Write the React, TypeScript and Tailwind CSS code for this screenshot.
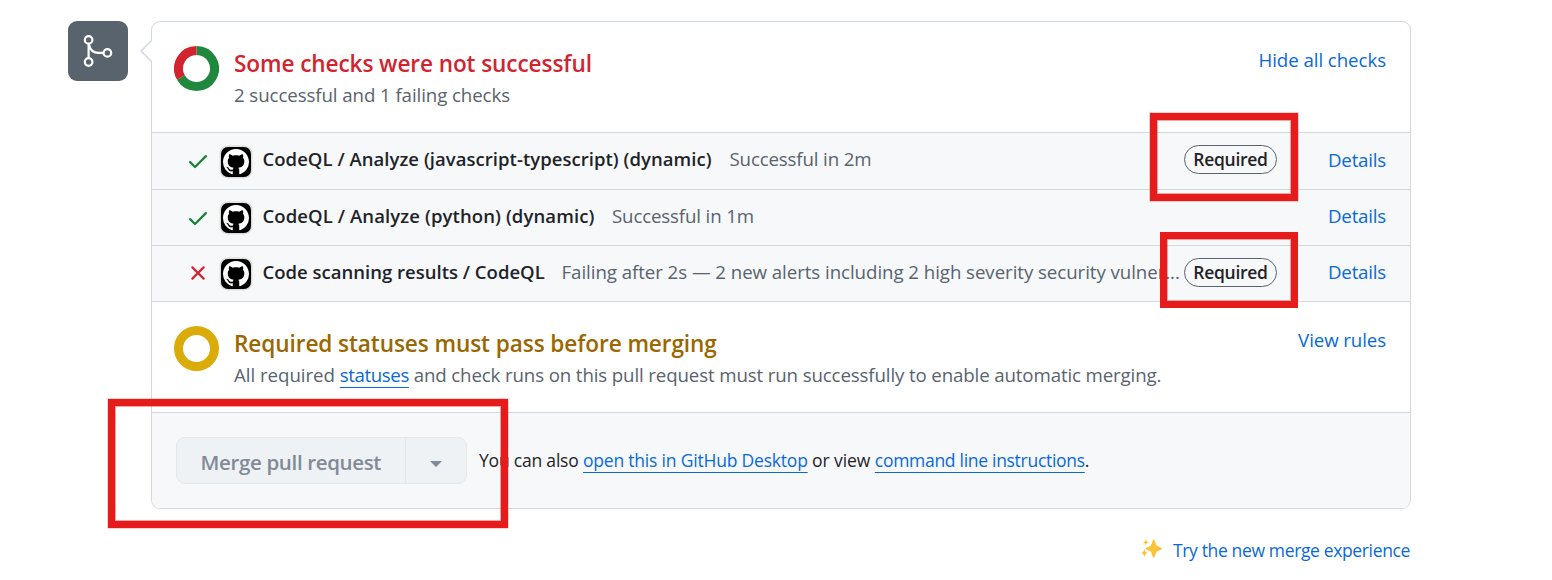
const MARK =
  'M8 0c4.42 0 8 3.58 8 8a8.013 8.013 0 0 1-5.45 7.59c-.4.08-.55-.17-.55-.38 0-.27.01-1.13.01-2.2 0-.75-.25-1.23-.54-1.48 1.78-.2 3.65-.88 3.65-3.95 0-.88-.31-1.59-.82-2.15.08-.2.36-1.02-.08-2.12 0 0-.67-.22-2.2.82-.64-.18-1.32-.27-2-.27-.68 0-1.36.09-2 .27-1.53-1.03-2.2-.82-2.2-.82-.44 1.1-.16 1.92-.08 2.12-.51.56-.82 1.28-.82 2.15 0 3.06 1.86 3.75 3.64 3.95-.23.2-.44.55-.51 1.07-.46.21-1.61.55-2.33-.66-.15-.24-.6-.83-1.23-.82-.67.01-.27.38.01.53.34.19.73.9.82 1.13.16.45.68 1.31 2.69.94 0 .67.01 1.3.01 1.49 0 .21-.15.45-.55.38A7.995 7.995 0 0 1 0 8c0-4.42 3.58-8 8-8Z';
const CHECK =
  'M13.78 4.22a.75.75 0 0 1 0 1.06l-7.25 7.25a.75.75 0 0 1-1.06 0L2.22 9.28a.751.751 0 0 1 .018-1.042.751.751 0 0 1 1.042-.018L6 10.94l6.72-6.72a.75.75 0 0 1 1.06 0Z';
const CROSS =
  'M3.72 3.72a.75.75 0 0 1 1.06 0L8 6.94l3.22-3.22a.749.749 0 0 1 1.275.326.749.749 0 0 1-.215.734L9.06 8l3.22 3.22a.749.749 0 0 1-.326 1.275.749.749 0 0 1-.734-.215L8 9.06l-3.22 3.22a.751.751 0 0 1-1.042-.018.751.751 0 0 1-.018-1.042L6.94 8 3.72 4.78a.75.75 0 0 1 0-1.06Z';

interface Check {
  name: string;
  nameClass: string;
  status: string;
  statusClass: string;
  ok: boolean;
  required: boolean;
  rowClass: string;
  avatarClass: string;
  detailsClass: string;
}

const checks: Check[] = [
  {
    name: 'CodeQL / Analyze (javascript-typescript) (dynamic)',
    nameClass: 'tracking-[0.04px] w-[449.5px]',
    status: 'Successful in 2m',
    statusClass: 'tracking-[-0.15px]',
    ok: true,
    required: true,
    rowClass: 'h-[57px]',
    avatarClass: 'mt-[14px]',
    detailsClass: 'leading-[53px]',
  },
  {
    name: 'CodeQL / Analyze (python) (dynamic)',
    nameClass: 'tracking-[0.1px] w-[332px]',
    status: 'Successful in 1m',
    statusClass: 'tracking-[-0.15px]',
    ok: true,
    required: false,
    rowClass: 'h-[56px]',
    avatarClass: 'mt-[13px]',
    detailsClass: '',
  },
  {
    name: 'Code scanning results / CodeQL',
    nameClass: 'tracking-[0.01px] w-[281.5px]',
    status: 'Failing after 2s — 2 new alerts including 2 high severity security vulner...',
    statusClass: 'tracking-[-0.06px]',
    ok: false,
    required: true,
    rowClass: 'h-[56px]',
    avatarClass: 'mt-[13px]',
    detailsClass: '',
  },
];

function Link({ children, className = '' }: { children: string; className?: string }) {
  return (
    <a
      className={`text-[#0969da] underline decoration-1 underline-offset-[5px] [text-decoration-skip-ink:none] ${className}`}
    >
      {children}
    </a>
  );
}

function CheckRow({ check }: { check: Check }) {
  return (
    <div
      className={`flex shrink-0 items-start border-b border-[#d1d9e0] bg-[#f6f8fa] pr-[24px] pl-[34px] text-[18.7px] leading-[51px] ${check.rowClass}`}
    >
      <svg
        viewBox="0 0 16 16"
        className={`h-6 w-6 shrink-0 ${check.ok ? 'mt-4 fill-[#1a7f37]' : 'mt-[15px] fill-[#d1242f]'}`}
      >
        <path d={check.ok ? CHECK : CROSS} />
      </svg>
      <div
        className={`ml-[11px] flex h-[30px] w-[30px] shrink-0 items-center justify-center rounded-[7px] bg-black shadow-[0_0_0_1.5px_#1f232820] ${check.avatarClass}`}
      >
        <svg viewBox="0 0 16 16" className="h-[26px] w-[26px] fill-white">
          <path d={MARK} />
        </svg>
      </div>
      <span
        className={`ml-[11.5px] shrink-0 text-[18.5px] font-[560] whitespace-nowrap text-[#1f2328] ${check.nameClass}`}
      >
        {check.name}
      </span>
      <span className={`ml-[17.5px] whitespace-nowrap text-[#59636e] ${check.statusClass}`}>{check.status}</span>
      <div className="ml-auto flex shrink-0">
        {check.required && (
          <span className="mt-[12px] mr-[51px] flex h-[29px] w-[93px] items-center justify-center rounded-full border border-[#59636e] text-[17.5px] leading-[27px] font-[560] tracking-[-0.3px] text-[#1f2328]">
            Required
          </span>
        )}
        <a className={`w-[58px] tracking-[-0.2px] text-[#0969da] ${check.detailsClass}`}>Details</a>
      </div>
    </div>
  );
}

export default function App() {
  return (
    <div className="relative flex h-[580px] w-[1552px] flex-col overflow-hidden bg-white pt-[21px] pl-[68px] font-['Open_Sans','Noto_Sans',sans-serif]">
      <div className="flex items-start gap-[23px]">
        <div className="h-[60px] w-[60px] shrink-0 rounded-[9px] bg-[#59636e]">
          <svg viewBox="0 0 60 60" className="h-[60px] w-[60px] fill-none stroke-white stroke-[2.2]">
            <circle cx="20.6" cy="18.9" r="3.8" />
            <circle cx="20.6" cy="41" r="3.8" />
            <circle cx="39.4" cy="31.9" r="3.8" />
            <path d="M20.6 22.7V37.2M20.9 23.5C22 28.5 25.5 31.9 30.5 31.9H35.6" />
          </svg>
        </div>

        <div className="relative flex h-[488px] w-[1260px] flex-col rounded-[9px] border border-[#d1d9e0] bg-white">
          <svg viewBox="0 0 12 24" className="absolute top-[17px] left-[-12px] h-6 w-3">
            <path d="M12 1.500L1 12L12 22.500Z" fill="#fff" />
            <path d="M11.500 1.500L1 12L11.500 22.500" fill="none" stroke="#d1d9e0" strokeWidth="1.5" />
          </svg>

          <div className="flex h-[111px] shrink-0 items-start border-b border-[#d1d9e0] pt-[23px] pr-[24px] pl-[22px]">
            <svg viewBox="0 0 45 45" className="mt-px h-[45px] w-[45px] shrink-0 fill-none stroke-[9]">
              <path d="M22.5 4.5A18 18 0 1 1 6.91 31.5" stroke="#1f883d" />
              <path d="M6.91 31.5A18 18 0 0 1 22.5 4.5" stroke="#d1242f" />
            </svg>
            <div className="ml-[15px] flex flex-col items-start">
              <h3 className="mt-px mb-[-1px] text-[22.6px] leading-9 font-[560] tracking-[-0.1px] text-[#d1242f]">
                Some checks were not successful
              </h3>
              <p className="text-[18.7px] leading-[27px] tracking-[-0.09px] text-[#59636e]">
                2 successful and 1 failing checks
              </p>
            </div>
            <a className="mt-px ml-auto text-[18.7px] leading-[27px] tracking-[-0.07px] text-[#0969da]">
              Hide all checks
            </a>
          </div>

          {checks.map((check) => (
            <CheckRow key={check.name} check={check} />
          ))}

          <div className="flex h-[111px] shrink-0 items-start border-b border-[#d1d9e0] pt-[23px] pr-[24px] pl-[22px]">
            <svg
              viewBox="0 0 45 45"
              className="mt-px h-[45px] w-[45px] shrink-0 fill-none stroke-[#dbab0a] stroke-[9]"
            >
              <circle cx="22.5" cy="22.5" r="18" />
            </svg>
            <div className="ml-[15px] flex flex-col items-start">
              <h3 className="mt-px mb-[-1px] text-[22.6px] leading-9 font-[560] tracking-[-0.09px] text-[#9a6700]">
                Required statuses must pass before merging
              </h3>
              <p className="text-[18.7px] leading-[27px] tracking-[-0.13px] text-[#59636e]">
                <span className="tracking-[-0.04px]">All required </span>
                <Link className="tracking-[-0.4px]">statuses</Link> and check runs on this pull request must run
                successfully to enable automatic merging.
              </p>
            </div>
            <a className="mt-px ml-auto text-[18.7px] leading-[27px] tracking-[-0.1px] text-[#0969da]">View rules</a>
          </div>

          <div className="flex flex-1 items-start rounded-b-[8px] bg-[#f6f8fa] pt-6 pl-6">
            <div className="flex h-[47px] w-[291px] shrink-0 rounded-[9px] border border-[#e3e8ec] bg-[#eff2f5]">
              <button className="flex w-[228px] items-center pt-[3px] pl-[23.5px] text-[20.5px] leading-6 font-[580] tracking-[-0.35px] whitespace-nowrap text-[#818b98]">
                Merge pull request
              </button>
              <button className="flex flex-1 items-start justify-center border-l border-[#e3e8ec] pt-[23px]">
                <svg viewBox="0 0 12 6" className="h-[6px] w-[12px] fill-[#818b98]">
                  <path d="M1 0H11Q12 0 11.3.8L6.6 5.6Q6 6.2 5.4 5.6L.7.8Q0 0 1 0Z" />
                </svg>
              </button>
            </div>
            <p className="ml-[12px] text-[17.5px] leading-[47px] tracking-[-0.2px] whitespace-nowrap text-[#1f2328]">
              You can also <Link>open this in GitHub Desktop</Link>
              <span className="tracking-[-0.08px]"> or view </span>
              <Link className="tracking-[-0.29px]">command line instructions</Link>.
            </p>
          </div>
        </div>
      </div>

      <div className="mt-[27px] mr-[142px] flex items-start justify-end">
        <svg viewBox="0 0 22 20" className="mt-[2px] mr-[10px] h-5 w-[22px] fill-[#fbc33a]">
          <path d="M12.7 1.5C13.2 1.5 13.5 2 13.7 2.6L15.1 6.4C15.4 7.3 15.8 7.8 16.8 8.2L20 9.7C21.4 10.3 21.4 11.2 20 11.8L16.8 13.1C15.8 13.5 15.4 14 15.1 14.9L13.7 18.8C13.3 20.2 12.2 20.2 11.8 18.8L10.4 14.9C10.1 14 9.7 13.5 8.7 13.1L5.6 11.8C4.2 11.2 4.2 10.3 5.6 9.7L8.7 8.2C9.7 7.8 10.1 7.3 10.4 6.4L11.8 2.6C12 2 12.2 1.5 12.7 1.5Z" />
          <path d="M4.8 1.6L5.8 3.6L7.6 4.4L5.8 5.2L4.8 7.2L3.9 5.2L2 4.4L3.9 3.6Z" />
          <path d="M3.4 11L4.6 13.9L6.7 15L4.6 16.1L3.4 19L2.3 16.1L0 15L2.3 13.9Z" />
        </svg>
        <a className="text-[17.5px] leading-[28px] tracking-[-0.36px] text-[#0969da]">Try the new merge experience</a>
      </div>

      <div className="absolute top-[113px] left-[1150px] h-[88px] w-[148px] border-[7px] border-[#e61c1c] shadow-[inset_0_0_0_1px_#e61c1c66,0_0_0_0.5px_#e61c1c66]" />
      <div className="absolute top-[232px] left-[1160px] h-[76px] w-[138px] border-[7px] border-[#e61c1c] shadow-[inset_0_0_0_1px_#e61c1c66]" />
      <div className="absolute top-[399px] left-[108px] h-[129px] w-[400px] border-[7px] border-[#e61c1c] shadow-[inset_0_0_0_1px_#e61c1c66,0_0_0_0.5px_#e61c1c66]" />
    </div>
  );
}
